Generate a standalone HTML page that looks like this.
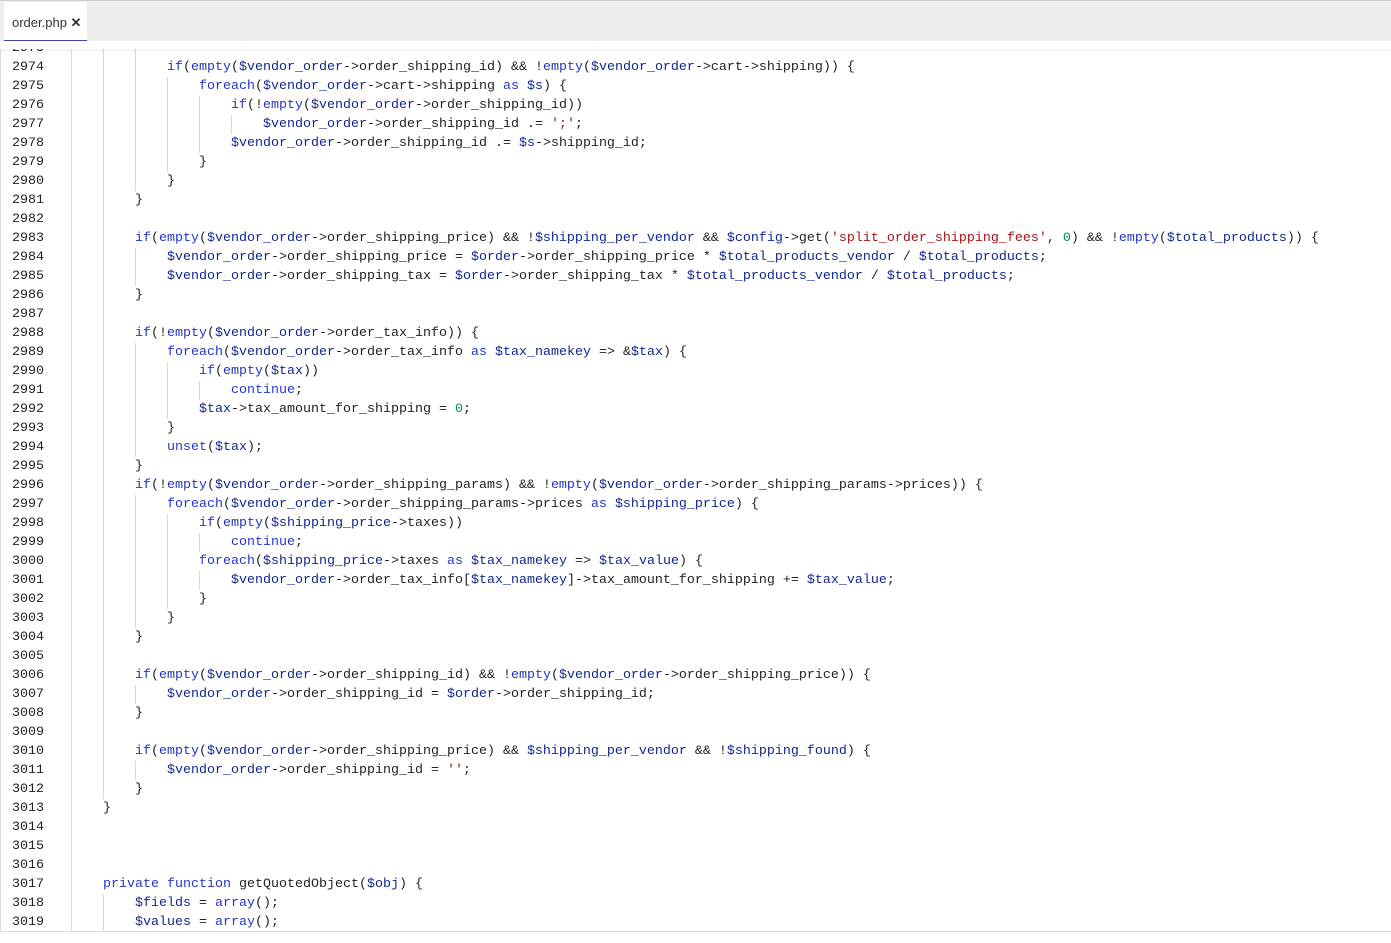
<!DOCTYPE html>
<html><head><meta charset="utf-8"><style>
html,body{margin:0;padding:0;width:1391px;height:943px;overflow:hidden;background:#fff;}
.hdr{position:absolute;left:0;top:0;width:1391px;height:41px;background:#eeeeee;border-top:1px solid #cfcfcf;box-sizing:border-box;z-index:3}
.tab{position:absolute;left:4px;top:1px;width:83px;height:40px;background:#fff;border-bottom:2px solid #3f48a8;box-sizing:border-box;font:13px "Liberation Sans",sans-serif;color:#333;padding:13px 0 0 8px}
.strip{position:absolute;left:0;top:41px;width:1391px;height:8px;background:#fff;z-index:3;box-shadow:0 2px 3px rgba(0,0,0,0.06)}
.code{position:absolute;left:0;top:38.5px;width:1391px;height:893.5px;border-left:1px solid #ddd;border-bottom:1px solid #ddd;box-sizing:border-box;overflow:hidden;font:13.33px/19px "Liberation Mono",monospace;color:#222}
.gut{position:absolute;left:70px;top:0;bottom:0;border-left:1px solid #ddd}
.l{height:19px;position:relative;white-space:nowrap}
.n{position:absolute;left:11px;top:0;color:#222}
.t{position:absolute;left:70px;top:0;white-space:pre}
i{display:inline-block;width:32px;height:19px;vertical-align:top;border-left:1px solid #d8d8d8;box-sizing:border-box;font-style:normal}
i.f{border-left-color:transparent}
.k{color:#2435c8}.v{color:#13268f}.s{color:#a31515}.m{color:#098658}
</style></head><body>
<div class="hdr"><div class="tab">order.php <b>✕</b></div></div>
<div class="strip"></div>
<div class="code"><div class="gut"></div>
<div class="l"><span class="n">2973</span><span class="t"><i class="f"></i><i></i><i></i></span></div>
<div class="l"><span class="n">2974</span><span class="t"><i class="f"></i><i></i><i></i><span class="k">if</span>(<span class="k">empty</span>(<span class="v">$vendor_order</span>->order_shipping_id) &amp;&amp; !<span class="k">empty</span>(<span class="v">$vendor_order</span>->cart->shipping)) {</span></div>
<div class="l"><span class="n">2975</span><span class="t"><i class="f"></i><i></i><i></i><i></i><span class="k">foreach</span>(<span class="v">$vendor_order</span>->cart->shipping <span class="k">as</span> <span class="v">$s</span>) {</span></div>
<div class="l"><span class="n">2976</span><span class="t"><i class="f"></i><i></i><i></i><i></i><i></i><span class="k">if</span>(!<span class="k">empty</span>(<span class="v">$vendor_order</span>->order_shipping_id))</span></div>
<div class="l"><span class="n">2977</span><span class="t"><i class="f"></i><i></i><i></i><i></i><i></i><i></i><span class="v">$vendor_order</span>->order_shipping_id .= <span class="s">';'</span>;</span></div>
<div class="l"><span class="n">2978</span><span class="t"><i class="f"></i><i></i><i></i><i></i><i></i><span class="v">$vendor_order</span>->order_shipping_id .= <span class="v">$s</span>->shipping_id;</span></div>
<div class="l"><span class="n">2979</span><span class="t"><i class="f"></i><i></i><i></i><i></i>}</span></div>
<div class="l"><span class="n">2980</span><span class="t"><i class="f"></i><i></i><i></i>}</span></div>
<div class="l"><span class="n">2981</span><span class="t"><i class="f"></i><i></i>}</span></div>
<div class="l"><span class="n">2982</span><span class="t"><i class="f"></i><i></i></span></div>
<div class="l"><span class="n">2983</span><span class="t"><i class="f"></i><i></i><span class="k">if</span>(<span class="k">empty</span>(<span class="v">$vendor_order</span>->order_shipping_price) &amp;&amp; !<span class="v">$shipping_per_vendor</span> &amp;&amp; <span class="v">$config</span>->get(<span class="s">'split_order_shipping_fees'</span>, <span class="m">0</span>) &amp;&amp; !<span class="k">empty</span>(<span class="v">$total_products</span>)) {</span></div>
<div class="l"><span class="n">2984</span><span class="t"><i class="f"></i><i></i><i></i><span class="v">$vendor_order</span>->order_shipping_price = <span class="v">$order</span>->order_shipping_price * <span class="v">$total_products_vendor</span> / <span class="v">$total_products</span>;</span></div>
<div class="l"><span class="n">2985</span><span class="t"><i class="f"></i><i></i><i></i><span class="v">$vendor_order</span>->order_shipping_tax = <span class="v">$order</span>->order_shipping_tax * <span class="v">$total_products_vendor</span> / <span class="v">$total_products</span>;</span></div>
<div class="l"><span class="n">2986</span><span class="t"><i class="f"></i><i></i>}</span></div>
<div class="l"><span class="n">2987</span><span class="t"><i class="f"></i><i></i></span></div>
<div class="l"><span class="n">2988</span><span class="t"><i class="f"></i><i></i><span class="k">if</span>(!<span class="k">empty</span>(<span class="v">$vendor_order</span>->order_tax_info)) {</span></div>
<div class="l"><span class="n">2989</span><span class="t"><i class="f"></i><i></i><i></i><span class="k">foreach</span>(<span class="v">$vendor_order</span>->order_tax_info <span class="k">as</span> <span class="v">$tax_namekey</span> => &amp;<span class="v">$tax</span>) {</span></div>
<div class="l"><span class="n">2990</span><span class="t"><i class="f"></i><i></i><i></i><i></i><span class="k">if</span>(<span class="k">empty</span>(<span class="v">$tax</span>))</span></div>
<div class="l"><span class="n">2991</span><span class="t"><i class="f"></i><i></i><i></i><i></i><i></i><span class="k">continue</span>;</span></div>
<div class="l"><span class="n">2992</span><span class="t"><i class="f"></i><i></i><i></i><i></i><span class="v">$tax</span>->tax_amount_for_shipping = <span class="m">0</span>;</span></div>
<div class="l"><span class="n">2993</span><span class="t"><i class="f"></i><i></i><i></i>}</span></div>
<div class="l"><span class="n">2994</span><span class="t"><i class="f"></i><i></i><i></i><span class="k">unset</span>(<span class="v">$tax</span>);</span></div>
<div class="l"><span class="n">2995</span><span class="t"><i class="f"></i><i></i>}</span></div>
<div class="l"><span class="n">2996</span><span class="t"><i class="f"></i><i></i><span class="k">if</span>(!<span class="k">empty</span>(<span class="v">$vendor_order</span>->order_shipping_params) &amp;&amp; !<span class="k">empty</span>(<span class="v">$vendor_order</span>->order_shipping_params->prices)) {</span></div>
<div class="l"><span class="n">2997</span><span class="t"><i class="f"></i><i></i><i></i><span class="k">foreach</span>(<span class="v">$vendor_order</span>->order_shipping_params->prices <span class="k">as</span> <span class="v">$shipping_price</span>) {</span></div>
<div class="l"><span class="n">2998</span><span class="t"><i class="f"></i><i></i><i></i><i></i><span class="k">if</span>(<span class="k">empty</span>(<span class="v">$shipping_price</span>->taxes))</span></div>
<div class="l"><span class="n">2999</span><span class="t"><i class="f"></i><i></i><i></i><i></i><i></i><span class="k">continue</span>;</span></div>
<div class="l"><span class="n">3000</span><span class="t"><i class="f"></i><i></i><i></i><i></i><span class="k">foreach</span>(<span class="v">$shipping_price</span>->taxes <span class="k">as</span> <span class="v">$tax_namekey</span> => <span class="v">$tax_value</span>) {</span></div>
<div class="l"><span class="n">3001</span><span class="t"><i class="f"></i><i></i><i></i><i></i><i></i><span class="v">$vendor_order</span>->order_tax_info[<span class="v">$tax_namekey</span>]->tax_amount_for_shipping += <span class="v">$tax_value</span>;</span></div>
<div class="l"><span class="n">3002</span><span class="t"><i class="f"></i><i></i><i></i><i></i>}</span></div>
<div class="l"><span class="n">3003</span><span class="t"><i class="f"></i><i></i><i></i>}</span></div>
<div class="l"><span class="n">3004</span><span class="t"><i class="f"></i><i></i>}</span></div>
<div class="l"><span class="n">3005</span><span class="t"><i class="f"></i><i></i></span></div>
<div class="l"><span class="n">3006</span><span class="t"><i class="f"></i><i></i><span class="k">if</span>(<span class="k">empty</span>(<span class="v">$vendor_order</span>->order_shipping_id) &amp;&amp; !<span class="k">empty</span>(<span class="v">$vendor_order</span>->order_shipping_price)) {</span></div>
<div class="l"><span class="n">3007</span><span class="t"><i class="f"></i><i></i><i></i><span class="v">$vendor_order</span>->order_shipping_id = <span class="v">$order</span>->order_shipping_id;</span></div>
<div class="l"><span class="n">3008</span><span class="t"><i class="f"></i><i></i>}</span></div>
<div class="l"><span class="n">3009</span><span class="t"><i class="f"></i><i></i></span></div>
<div class="l"><span class="n">3010</span><span class="t"><i class="f"></i><i></i><span class="k">if</span>(<span class="k">empty</span>(<span class="v">$vendor_order</span>->order_shipping_price) &amp;&amp; <span class="v">$shipping_per_vendor</span> &amp;&amp; !<span class="v">$shipping_found</span>) {</span></div>
<div class="l"><span class="n">3011</span><span class="t"><i class="f"></i><i></i><i></i><span class="v">$vendor_order</span>->order_shipping_id = <span class="s">''</span>;</span></div>
<div class="l"><span class="n">3012</span><span class="t"><i class="f"></i><i></i>}</span></div>
<div class="l"><span class="n">3013</span><span class="t"><i class="f"></i>}</span></div>
<div class="l"><span class="n">3014</span><span class="t"></span></div>
<div class="l"><span class="n">3015</span><span class="t"></span></div>
<div class="l"><span class="n">3016</span><span class="t"></span></div>
<div class="l"><span class="n">3017</span><span class="t"><i class="f"></i><span class="k">private</span> <span class="k">function</span> getQuotedObject(<span class="v">$obj</span>) {</span></div>
<div class="l"><span class="n">3018</span><span class="t"><i class="f"></i><i></i><span class="v">$fields</span> = <span class="k">array</span>();</span></div>
<div class="l"><span class="n">3019</span><span class="t"><i class="f"></i><i></i><span class="v">$values</span> = <span class="k">array</span>();</span></div>
</div>
</body></html>
